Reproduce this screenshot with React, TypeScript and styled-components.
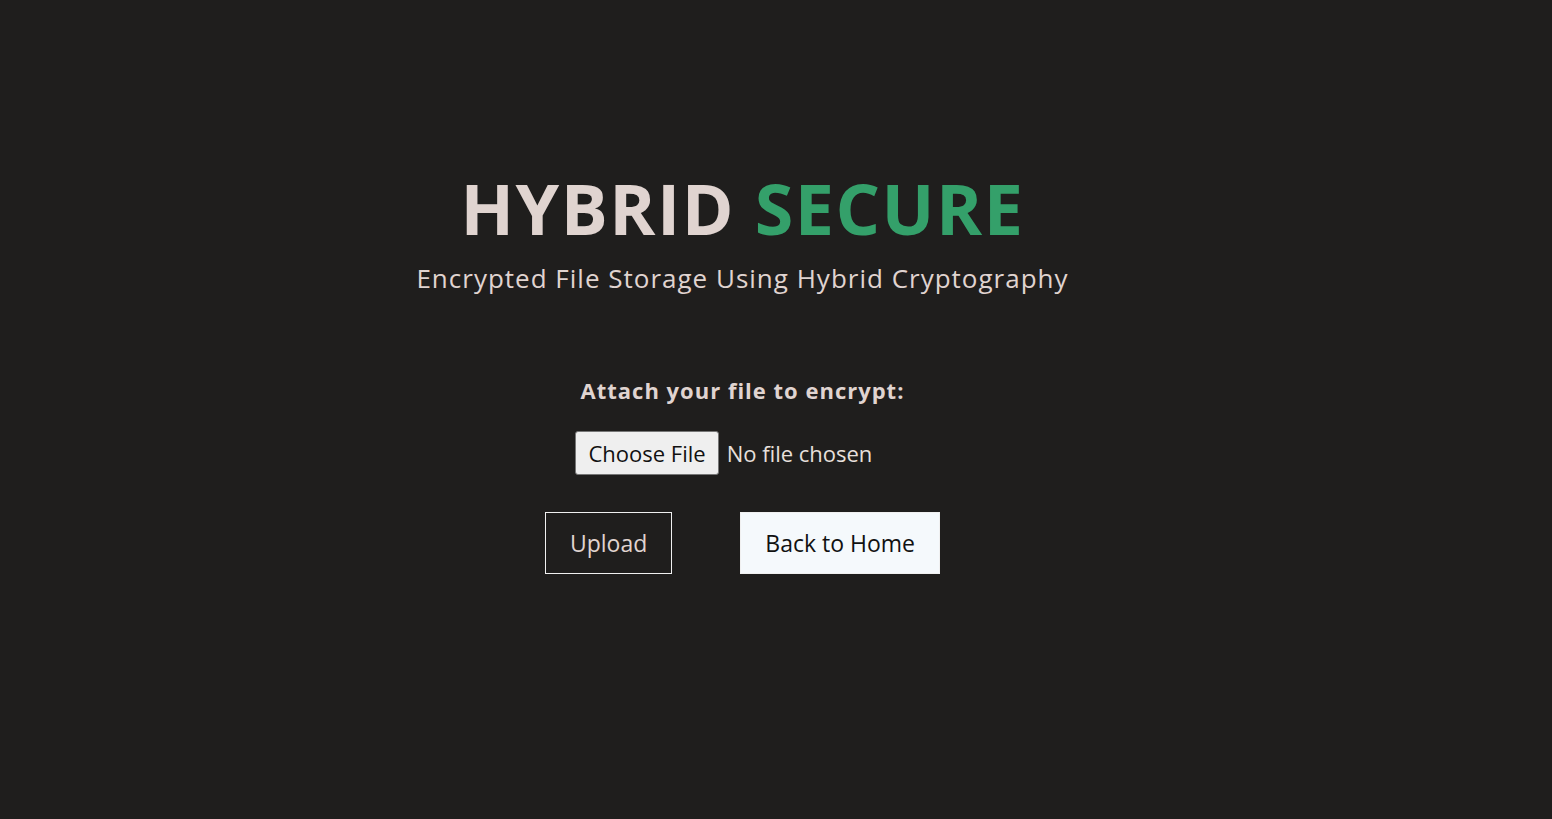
import React from "react";
import styled, { createGlobalStyle } from "styled-components";

const Global = createGlobalStyle`
  html, body { margin: 0; padding: 0; background: #1f1e1d; }
  body { font-family: "Open Sans", "Noto Sans", sans-serif; }
`;

const Page = styled.main`
  min-height: 819px;
  display: flex;
  flex-direction: column;
  align-items: center;
  box-sizing: border-box;
  padding-top: 166px;
  padding-right: 67px;
`;

const Title = styled.h1`
  margin: 0;
  font-size: 70px;
  font-weight: 700;
  line-height: 84px;
  color: #e0d4d0;
  letter-spacing: 1.5px;
`;

const Accent = styled.span`
  color: #34a06a;
`;

const Subtitle = styled.p`
  margin: 0;
  margin-top: 11px;
  font-size: 26px;
  line-height: 34px;
  color: #e0d4d0;
  letter-spacing: 1px;
`;

const Form = styled.form`
  margin-top: 80px;
  display: flex;
  flex-direction: column;
  align-items: center;
`;

const Label = styled.label`
  font-size: 22px;
  font-weight: 700;
  color: #e0d4d0;
  letter-spacing: 1px;
  line-height: 30px;
`;

const FileInput = styled.input`
  margin-top: 26px;
  font-family: "Open Sans", sans-serif;
  font-size: 22px;
  color: #e8e0dc;
  width: 334px;
  &::file-selector-button {
    font-family: inherit;
    font-size: 22px;
    color: #111;
    background: #efefef;
    border: 1px solid #767676;
    border-radius: 3px;
    padding: 3px 12px;
    margin-right: 8px;
    height: 44px;
  }
`;

const Buttons = styled.div`
  margin-top: 37px;
  display: flex;
  gap: 68px;
`;

const Button = styled.button<{ $light?: boolean }>`
  height: 62px;
  padding: 0 24px;
  font-family: "Open Sans", sans-serif;
  font-size: 23px;
  border: 1px solid #f0f0f0;
  border-radius: 0;
  background: ${(p) => (p.$light ? "#f5f9fc" : "transparent")};
  color: ${(p) => (p.$light ? "#111" : "#e0d4d0")};
  cursor: pointer;
`;

export default function App() {
  return (
    <>
      <Global />
      <Page>
        <Title>
          HYBRID <Accent>SECURE</Accent>
        </Title>
        <Subtitle>Encrypted File Storage Using Hybrid Cryptography</Subtitle>
        <Form onSubmit={(e) => e.preventDefault()}>
          <Label htmlFor="file">Attach your file to encrypt:</Label>
          <FileInput id="file" type="file" />
          <Buttons>
            <Button type="submit">Upload</Button>
            <Button type="button" $light>
              Back to Home
            </Button>
          </Buttons>
        </Form>
      </Page>
    </>
  );
}
